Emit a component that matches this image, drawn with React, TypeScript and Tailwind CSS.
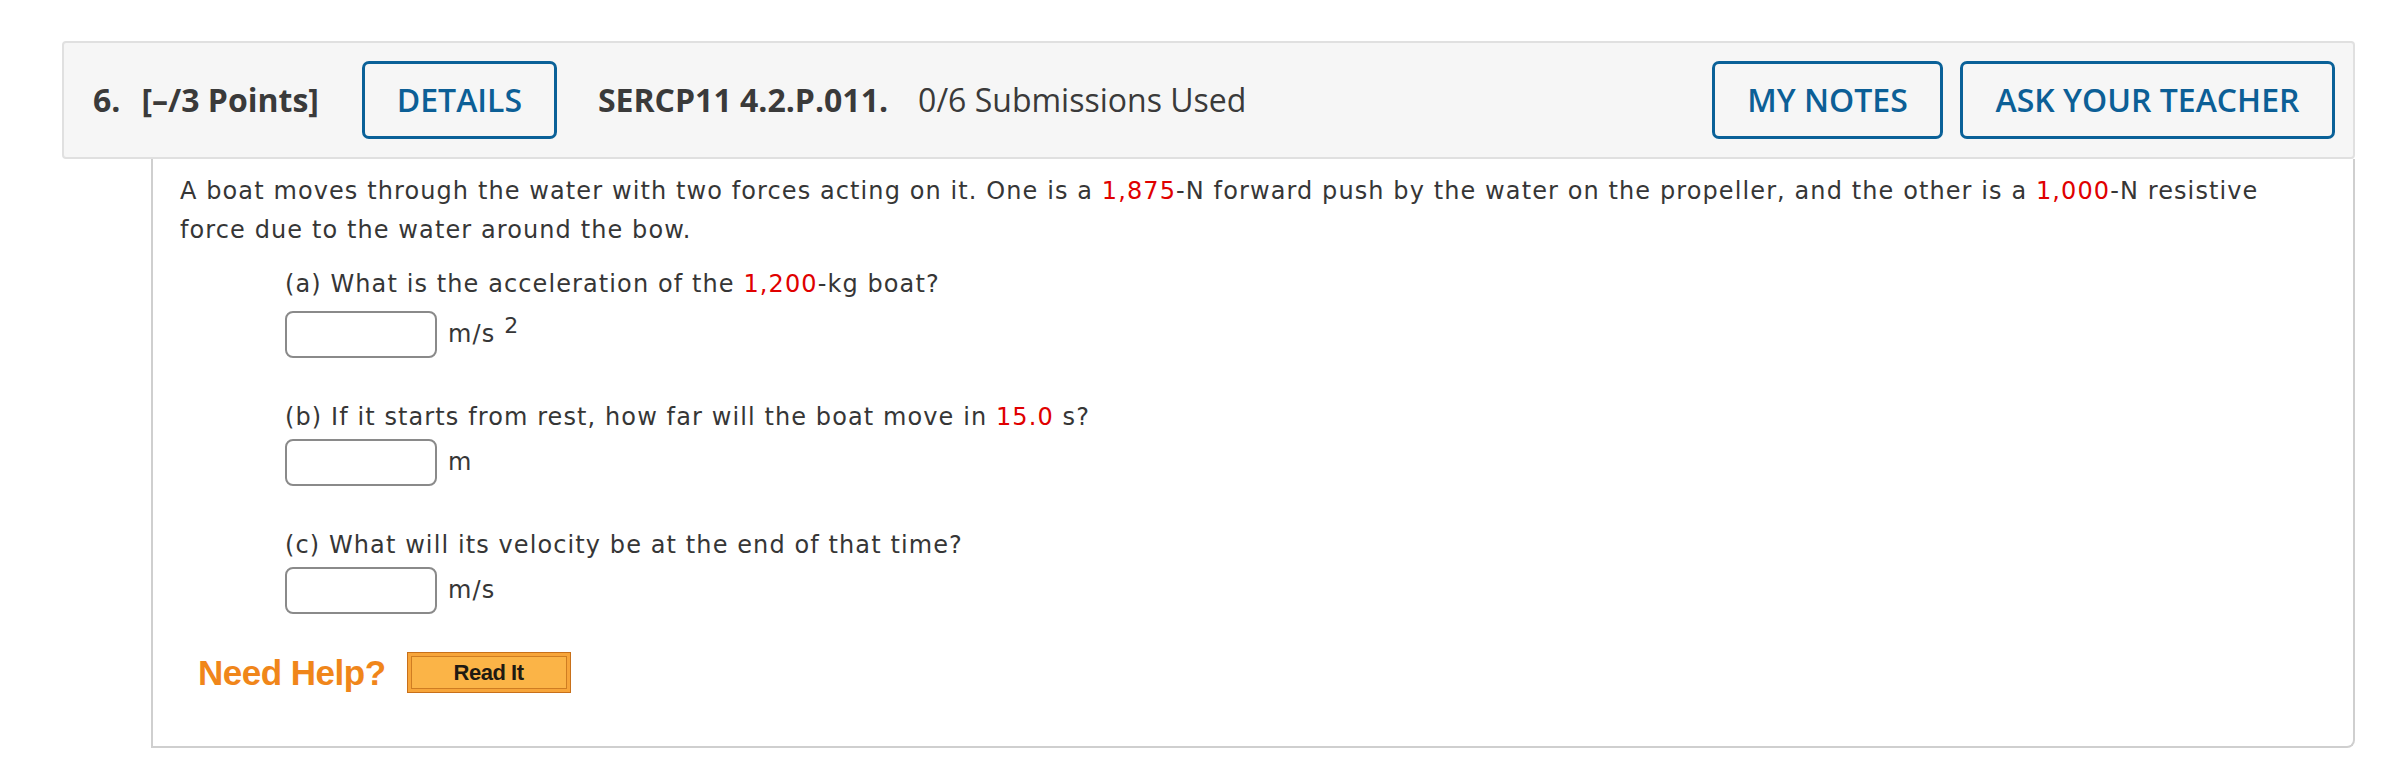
const Red = ({ children }: { children: React.ReactNode }) => (
  <span className="text-[#e00000]">{children}</span>
);

function AnswerBox({ unit, sup }: { unit: string; sup?: string }) {
  return (
    <div className="flex items-center">
      <input
        type="text"
        className="w-[152px] h-[47px] rounded-[8px] border-2 border-[#8a8a8a] bg-white"
      />
      <span className="ml-[11px] text-[24px] leading-[39px]">
        {unit}
        {sup && <sup className="ml-[9px] text-[22px] relative -top-[9px]">{sup}</sup>}
      </span>
    </div>
  );
}

function OutlineButton({ label, width }: { label: string; width: string }) {
  return (
    <button
      className={`${width} h-[78px] rounded-[7px] border-[3px] border-[#0a6198] text-[#0c5f96] text-[32px] font-semibold flex items-center justify-center`}
    >
      {label}
    </button>
  );
}

export default function App() {
  return (
    <div className="bg-white min-h-screen pt-[41px] pl-[62px]">
      <div className="w-[2293px]">
        {/* question header */}
        <div
          className="h-[118px] bg-[#f6f6f6] border-2 border-[#e0e0e0] rounded-[4px] flex items-center pl-[29px] pr-[18px] text-[#3a3a3a]"
          style={{ fontFamily: '"Open Sans", sans-serif' }}
        >
          <span className="text-[32px] font-bold">6.</span>
          <span className="ml-[21px] text-[32px] font-bold">[–/3 Points]</span>
          <div className="ml-[43px]">
            <OutlineButton label="DETAILS" width="w-[195px]" />
          </div>
          <span className="ml-[41px] text-[32px] font-bold">SERCP11 4.2.P.011.</span>
          <span className="ml-[30px] text-[32px]">0/6 Submissions Used</span>
          <div className="flex-1" />
          <OutlineButton label="MY NOTES" width="w-[231px]" />
          <div className="ml-[17px]">
            <OutlineButton label="ASK YOUR TEACHER" width="w-[375px]" />
          </div>
        </div>

        {/* question body */}
        <div
          className="ml-[89px] border-2 border-t-0 border-[#cfcfcf] rounded-br-[8px] pl-[27px] pr-[40px] pt-[13px] pb-[53px] text-[#363636] text-[24px] leading-[39px] tracking-[1.1px]"
          style={{ fontFamily: '"DejaVu Sans", Verdana, sans-serif' }}
        >
          <p>
            A boat moves through the water with two forces acting on it. One is a <Red>1,875</Red>-N
            forward push by the water on the propeller, and the other is a <Red>1,000</Red>-N resistive
            force due to the water around the bow.
          </p>

          <div className="ml-[105px]">
            <p className="mt-[15px]">
              (a) What is the acceleration of the <Red>1,200</Red>-kg boat?
            </p>
            <div className="mt-[7px]">
              <AnswerBox unit="m/s" sup="2" />
            </div>

            <p className="mt-[40px]">
              (b) If it starts from rest, how far will the boat move in <Red>15.0</Red> s?
            </p>
            <div className="mt-[2px]">
              <AnswerBox unit="m" />
            </div>

            <p className="mt-[40px]">(c) What will its velocity be at the end of that time?</p>
            <div className="mt-[2px]">
              <AnswerBox unit="m/s" />
            </div>
          </div>

          <div
            className="mt-[38px] ml-[18px] flex items-center tracking-normal"
            style={{ fontFamily: '"Liberation Sans", Arial, sans-serif' }}
          >
            <span className="text-[35px] font-bold text-[#f0861a] tracking-[-0.5px]">Need Help?</span>
            <button className="ml-[21px] w-[164px] h-[41px] bg-[#f7a53a] border border-[#c8701a] p-[3px]">
              <span className="h-full w-full flex items-center justify-center border border-[#cf7d22] bg-[#fbb447] text-[22px] font-bold text-[#1f1a12] tracking-[-0.5px]">
                Read It
              </span>
            </button>
          </div>
        </div>
      </div>
    </div>
  );
}
